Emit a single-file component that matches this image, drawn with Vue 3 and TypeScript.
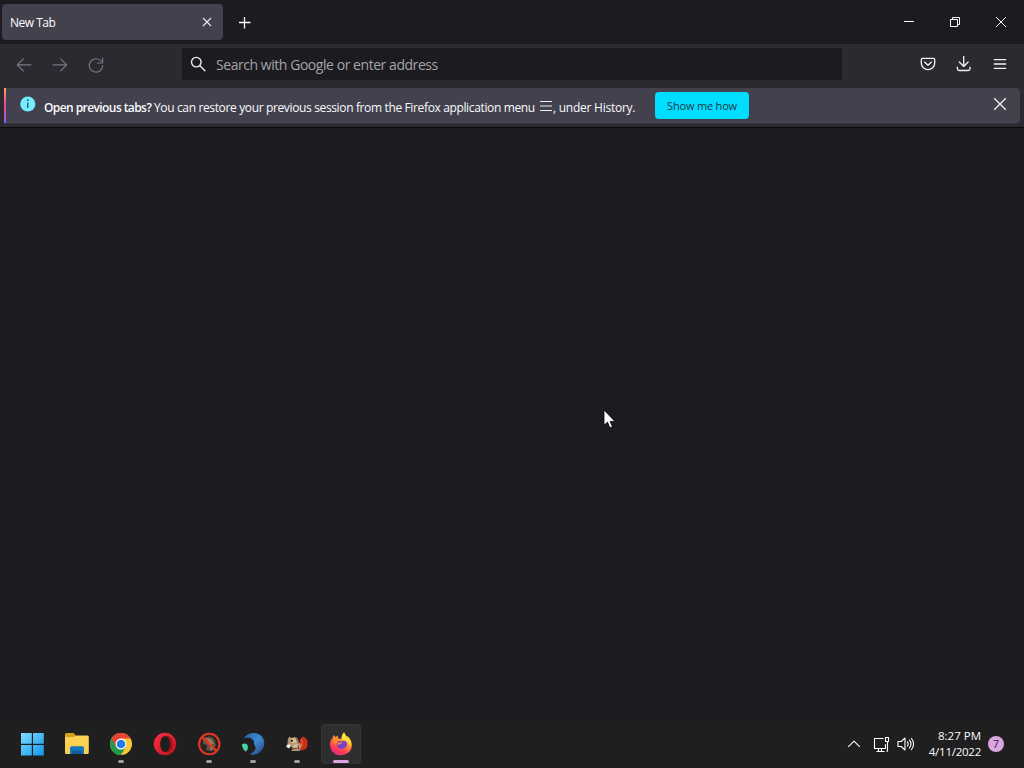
<script setup lang="ts">
interface TaskApp {
  id: string
  running: boolean
  active: boolean
}

const apps: TaskApp[] = [
  { id: 'start', running: false, active: false },
  { id: 'files', running: false, active: false },
  { id: 'chrome', running: true, active: false },
  { id: 'opera', running: false, active: false },
  { id: 'blocked', running: true, active: false },
  { id: 'swirl', running: true, active: false },
  { id: 'squirrel', running: true, active: false },
  { id: 'firefox', running: true, active: true },
]
</script>

<template>
  <div class="desktop">
    <header class="titlebar">
      <div class="tab">
        <span class="tab-title">New Tab</span>
        <svg class="tab-close" width="10" height="10" viewBox="0 0 10 10"><path d="M1 1l8 8M9 1l-8 8" /></svg>
      </div>
      <svg class="new-tab" width="12" height="13" viewBox="0 0 12 13"><path d="M5.5 1v11.5M0 6.5h11.5" /></svg>
      <div class="window-controls">
        <span class="wbtn"><svg width="12" height="12" viewBox="0 0 12 12"><path d="M1 5.5h10" /></svg></span>
        <span class="wbtn"><svg width="12" height="12" viewBox="0 0 12 12"><path d="M1.5 3.5h7v7h-7zM3.5 3.5v-2h7v7h-2" /></svg></span>
        <span class="wbtn"><svg width="12" height="12" viewBox="0 0 12 12"><path d="M1 1l10 10M11 1L1 11" /></svg></span>
      </div>
    </header>

    <nav class="toolbar">
      <span class="tool dim"><svg width="16" height="16" viewBox="0 0 16 16"><path d="M15 7.8H1.3M7.3 1.8l-6 6 6 6" /></svg></span>
      <span class="tool dim"><svg width="16" height="16" viewBox="0 0 16 16"><path d="M1 7.8h13.7M8.7 1.8l6 6-6 6" /></svg></span>
      <span class="tool dim"><svg width="16" height="16" viewBox="0 0 16 16"><path d="M13.2 4.2A6.7 6.7 0 1 0 14.7 8.6M14.6 1v5H9.5" /></svg></span>
      <div class="urlbar">
        <svg width="16" height="16" viewBox="0 0 16 16"><circle cx="6.3" cy="6.1" r="4.8" /><path d="M9.9 9.8l5 5" /></svg>
        <span class="placeholder">Search with Google or enter address</span>
      </div>
      <div class="tools-end">
        <span class="tool"><svg width="16" height="16" viewBox="0 0 16 16"><path d="M2.4 2.3h11.2q1.1 0 1.1 1.1v3.9a6.7 6.3 0 0 1-13.4 0V3.4q0-1.1 1.1-1.1zM4.6 6.1L8 9.3l3.4-3.2" /></svg></span>
        <span class="tool"><svg width="16" height="16" viewBox="0 0 16 16"><path d="M7.7.5v9.7M3.3 6l4.4 4.4L12.1 6M1.4 11.2v1.5q0 1.8 1.8 1.8h9q1.8 0 1.8-1.8v-1.5" /></svg></span>
        <span class="tool"><svg width="16" height="16" viewBox="0 0 16 16"><path d="M2.3 3.6h11.4M2.3 8h11.4M2.3 12.3h11.4" /></svg></span>
      </div>
    </nav>

    <section class="notice-area">
      <div class="notice">
        <i class="accent"></i>
        <svg class="info" width="16" height="16" viewBox="0 0 16 16">
          <circle cx="7.8" cy="8" r="7.6" fill="#73edff" />
          <path d="M7.8 6.5V12" stroke="#25515e" stroke-width="1.3" fill="none" />
          <circle cx="7.8" cy="4.2" r=".9" fill="#25515e" />
        </svg>
        <strong class="ask">Open previous tabs?</strong>
        <span class="message">You can restore your previous session from the Firefox application menu</span>
        <svg class="menu-glyph" width="12" height="12" viewBox="0 0 12 12"><path d="M0 1.5h12M0 6h12M0 10.5h12" /></svg>
        <span class="tail">, under History.</span>
        <button class="show">Show me how</button>
        <svg class="notice-close" width="14" height="14" viewBox="0 0 14 14"><path d="M1.2 1.2l11.6 11.6M12.8 1.2L1.2 12.8" /></svg>
      </div>
    </section>

    <main class="page">
      <svg class="pointer" width="14" height="21" viewBox="0 0 14 21">
        <path d="M1 1v15.3l3.5-3.2 2.4 5.7 2.5-1.1-2.3-5.3h4.8z" fill="#fff" stroke="#08080b" stroke-width=".8" />
      </svg>
    </main>

    <footer class="taskbar">
      <div class="apps">
        <div v-for="app in apps" :key="app.id" class="app" :class="[app.id, { active: app.active }]">
          <svg width="26" height="26" viewBox="0 0 26 26">
            <defs>
              <linearGradient id="winBlue" gradientUnits="userSpaceOnUse" x1="2" y1="2" x2="24" y2="24"><stop stop-color="#7edcff" /><stop offset="1" stop-color="#1499eb" /></linearGradient>
              <linearGradient id="operaRed" x1="0" y1="0" x2="1" y2="1"><stop stop-color="#ff3045" /><stop offset="1" stop-color="#b80f1d" /></linearGradient>
              <linearGradient id="swirlBlue" x1="0" y1="0" x2="1" y2="1"><stop stop-color="#2b5ca6" /><stop offset=".5" stop-color="#3b8bd0" /><stop offset="1" stop-color="#263c76" /></linearGradient>
              <linearGradient id="foxFire" x1=".8" y1="0" x2=".25" y2="1"><stop stop-color="#fff14b" /><stop offset=".4" stop-color="#ff9a2e" /><stop offset=".72" stop-color="#ff4054" /><stop offset="1" stop-color="#dc2585" /></linearGradient>
            </defs>
            <g v-if="app.id === 'start'" fill="url(#winBlue)">
              <path d="M2 2h10.8v10.8H2zM14 2h10.8v10.8H14zM2 14h10.8v10.5H2zM14 14h10.8v10.5H14z" />
            </g>
            <g v-else-if="app.id === 'files'">
              <path d="M2 3.5Q2 2 3.5 2h7L13 4.5v5H2z" fill="#d9a019" />
              <path d="M2 6h9l2.4-1.5h11q1.4 0 1.4 1.4v15.5q0 1.6-1.6 1.6H3.5Q2 23 2 21.5z" fill="#fad152" />
              <path d="M7 23v-6q0-1.7 1.7-1.7h10.6q1.7 0 1.7 1.7v6z" fill="#1676bd" />
              <path d="M9.5 19.5h9V23h-9z" fill="#125b9b" />
            </g>
            <g v-else-if="app.id === 'chrome'">
              <circle cx="13" cy="13" r="11" fill="#f8c934" />
              <path d="M13 13L3.47 7.5A11 11 0 0 0 13 24l4.8-8.2z" fill="#23984b" />
              <path d="M3.47 7.5A11 11 0 0 1 22.53 7.5H13L8.2 15.8z" fill="#e34435" />
              <circle cx="13" cy="13" r="5.5" fill="#fff" /><circle cx="13" cy="13" r="4.3" fill="#2878e5" />
            </g>
            <g v-else-if="app.id === 'opera'">
              <path fill-rule="evenodd" d="M13 1.8a11.2 11.2 0 1 1 0 22.4 11.2 11.2 0 1 1 0-22.4zm.3 3.1c-2.9 0-5.1 3.5-5.1 8.1s2.2 8.1 5.1 8.1 4.8-3.5 4.8-8.1-1.9-8.1-4.8-8.1z" fill="url(#operaRed)" />
              <path d="M13.3 4.9c4-1 7.2 2.7 7.2 8.1s-3.2 9.1-7.2 8.1c2.9 0 4.8-3.5 4.8-8.1s-1.9-8.1-4.8-8.1z" fill="#971319" />
            </g>
            <g v-else-if="app.id === 'blocked'">
              <circle cx="13.3" cy="13" r="9" fill="#292421" />
              <path d="M7 8q6-5 11 0l2 6-4 6-6-1 1-5-4-1z" fill="#635347" />
              <path d="M10 7l5 1 3 5-4 1zM14 16l4 1-3 3z" fill="#a0785c" />
              <circle cx="13.3" cy="13" r="10.2" fill="none" stroke="#df3924" stroke-width="2.1" />
              <path d="M6 5.8l15 14.6" stroke="#df3924" stroke-width="2.4" />
            </g>
            <g v-else-if="app.id === 'swirl'">
              <path d="M3.8 7.3C7.3 2.2 13.5.8 18.8 3.2c5.5 2.6 6.9 9 4.1 14.3-2.5 4.7-8 7.5-13.2 5.5 4.2-1.5 6.6-4.6 5.6-7.4-.7-2-1.8-2.8-1.2-4.8-1.8-3.4-4.8-5.5-10.3-3.5z" fill="url(#swirlBlue)" />
              <path d="M2 13.2c2.5-1.6 5.6-.8 5.9 2.2.3 2.4-.7 4.2-2.2 5.1C3.5 18.9 2 16.3 2 13.2z" fill="#42d5a0" />
            </g>
            <g v-else-if="app.id === 'squirrel'">
              <path d="M16 19c2-4-1.5-6 0-10 1.5-3.2 3.5-4.2 5-2.2q3.2 1.5 2.4 5.3c.7 3.5-1 6.8-4.7 7.1z" fill="#c92d17" />
              <path d="M17.4 8q1.5 3 .2 8" stroke="#ed7542" fill="none" />
              <path d="M4 8l1.2-2.4L7 7l4-1q3.4 1 3.8 5l2.7 3.2-1.4 5.7H7.4l1.3-3-4.2-2.2q-1.8-3-.5-6.7z" fill="#b5946f" />
              <path d="M6 8q4-3 7.5 2l-1.2 2H7zM9 14l5-1 1.5 3-5 1z" fill="#d9c29c" />
              <circle cx="7.8" cy="9.8" r="1.2" fill="#382419" /><path d="M3 13.4h3.5l-1 4.2L2.3 16z" fill="#eff3e9" />
              <path d="M8.3 18l5-1M14 14l1 5M12 8l3 4" stroke="#604332" />
            </g>
            <g v-else>
              <path d="M4.5 7l1.2-3 2 2.2 1.9-1.8.8 3 3 .5L16 1.3l2.7 4.5 1-.4c6 5 5.2 13.8-.7 17.2C11.3 27 1.7 22.7 2 12.7c.1-2.3 1.2-4.3 2.5-5.7z" fill="url(#foxFire)" />
              <path d="M5 7.5l.8-2.2 2 2.1 1.4-1.5.8 3.2 3.2.8-3 1.1-2.5 3q-3-3-2.7-6.5z" fill="#ff8132" />
              <path d="M13.4 8q.2-4.8 2.6-6.7 1 3 2.7 4.5l1-.4c3.2 3.2 3.7 6.7 2.8 10-1.2-4.2-3.9-6.2-9.1-7.4z" fill="#ffdc3c" />
              <path d="M9.6 11.3q1.5-1.8 4-.9 3.2-2 5 1.2c1.3 3-1 6-4.3 6.3-3.7.3-6.4-2.6-4.7-6.6z" fill="#7940c3" />
              <path d="M9.8 12.1l4.3-1.1-.7 1.4-3.4 1.5z" fill="#ff8c3a" />
            </g>
          </svg>
          <i v-if="app.running" class="running"></i>
        </div>
      </div>
      <div class="tray">
        <svg class="chevron" width="14" height="8" viewBox="0 0 14 8"><path d="M1.2 6.8L7 1.1l5.8 5.7" /></svg>
        <svg class="network" width="17" height="17" viewBox="0 0 17 17"><path d="M10.5 2.5h-9v10h11V8.3M5.5 12.5v3M8.5 12.5v3M3.5 15.5h8M12.5 1.5h3v4h-3zM14.5 5.5v9q0 1-1 1" /></svg>
        <svg class="volume" width="18" height="16" viewBox="0 0 18 16"><path d="M1 5.5h3.2L8 2v12l-3.8-3.5H1zM10.2 5.4q2 2.6 0 5.2M12.2 3.7q3.6 4.3 0 8.6M14.2 2q4.8 6 0 12" /></svg>
        <div class="clock"><span class="time">8:27 PM</span><span class="date">4/11/2022</span></div>
        <span class="count">7</span>
      </div>
    </footer>
  </div>
</template>

<style>
html, body { margin: 0; overflow: hidden; background: #1c1b22; }
</style>

<style scoped>
* { box-sizing: border-box; }
.desktop { width: 1024px; height: 768px; display: flex; flex-direction: column; background: #1c1b20; color: #fbfbfe; font-family: "Open Sans", "Noto Sans", sans-serif; font-size: 12px; overflow: hidden; }
svg { display: block; flex-shrink: 0; fill: none; stroke-linejoin: round; }
.titlebar { height: 44px; display: flex; align-items: center; background: #1c1b20; }
.titlebar svg { stroke: #f9f9fb; stroke-width: 1; }
.tab { width: 221px; height: 36px; margin-left: 2px; padding: 0 11px 0 8px; display: flex; align-items: center; justify-content: space-between; border-radius: 4px; background: #42414d; }
.tab-title { padding-top: 2px; font-size: 12px; line-height: 18px; letter-spacing: -.5px; }
.tab .tab-close { stroke: #e8e8ec; stroke-width: 1.1; }
.titlebar .new-tab { margin-left: 16px; stroke-width: 1.3; }
.window-controls { margin-left: auto; display: flex; }
.wbtn { width: 46px; height: 44px; display: flex; align-items: center; justify-content: center; }
.toolbar { height: 44px; padding: 0 6px; display: flex; align-items: center; background: #2b2a31; }
.tool { width: 36px; height: 36px; padding-bottom: 2px; display: flex; align-items: center; justify-content: center; }
.tool svg, .urlbar svg { stroke: #f0f0f4; stroke-width: 1.35; stroke-linecap: round; }
.tool.dim svg { stroke: #787780; stroke-width: 1.2; }
.urlbar { width: 660px; height: 32px; margin: -4px 0 0 68px; padding: 0 8px; display: flex; align-items: center; background: #1c1b20; }
.placeholder { margin: 2px 0 0 10px; color: #a5a4a9; font-size: 14px; line-height: 20px; letter-spacing: -.45px; white-space: nowrap; }
.tools-end { display: flex; margin: -2px 0 0 auto; }
.notice-area { height: 40px; padding: 0 4px; background: #2b2a31; border-bottom: 1px solid #09090c; }
.notice { height: 35px; display: flex; align-items: center; border-radius: 0 4px 4px 0; background: #42414d; white-space: nowrap; box-shadow: 0 1px 1px #38373f; }
.accent { width: 2px; height: 35px; background: linear-gradient(#ffa24b, #e44e91 48%, #9059ff); }
.info { margin: -3px 0 0 14px; }
.ask { width: 110px; margin-left: 8px; padding-top: 3px; font-weight: 600; letter-spacing: -.58px; }
.message { width: 386px; padding-top: 3px; letter-spacing: -.36px; }
.menu-glyph { margin-top: 1px; stroke: #eeeef2; stroke-width: 1; }
.tail { width: 103px; padding: 3px 0 0 1px; letter-spacing: -.25px; }
.show { width: 94px; height: 27px; padding: 0; border: 0; border-radius: 4px; background: #00ddff; color: #203744; font: 11px "Open Sans", sans-serif; letter-spacing: -.18px; }
.notice-close { margin: -3px 13px 0 auto; stroke: #f3f3f7; stroke-width: 1.3; }
.page { position: relative; height: 592px; background: #1c1b20; }
.pointer { position: absolute; left: 603px; top: 281px; }
.taskbar { height: 48px; display: flex; justify-content: space-between; background: #1f1f1f; }
.apps { display: flex; gap: 4px; padding: 4px 0 0 12px; }
.app { position: relative; width: 40px; height: 40px; display: flex; align-items: center; justify-content: center; border-radius: 4px; }
.app.files { margin-right: 1px; }
.app.active { background: #2e2e2e; box-shadow: inset 0 0 0 1px #343434; }
.running { position: absolute; left: 17px; bottom: 1px; width: 6px; height: 3px; border-radius: 2px; background: #a09f9f; }
.active .running { left: 12px; width: 16px; background: #dba6df; }
.tray { height: 48px; display: flex; align-items: center; padding-right: 20px; }
.tray svg { stroke: #fff; stroke-width: 1.1; }
.chevron { margin-right: 12px; }
.network { margin-right: 7px; }
.volume { margin-right: 10px; }
.clock { width: 56px; display: flex; flex-direction: column; align-items: flex-end; font-size: 11.5px; line-height: 16px; letter-spacing: -.25px; white-space: nowrap; }
.time { letter-spacing: 0; }
.count { width: 16px; height: 16px; margin-left: 7px; border-radius: 50%; background: #dba5e1; color: #34243a; font-size: 11px; line-height: 16px; text-align: center; }
</style>
